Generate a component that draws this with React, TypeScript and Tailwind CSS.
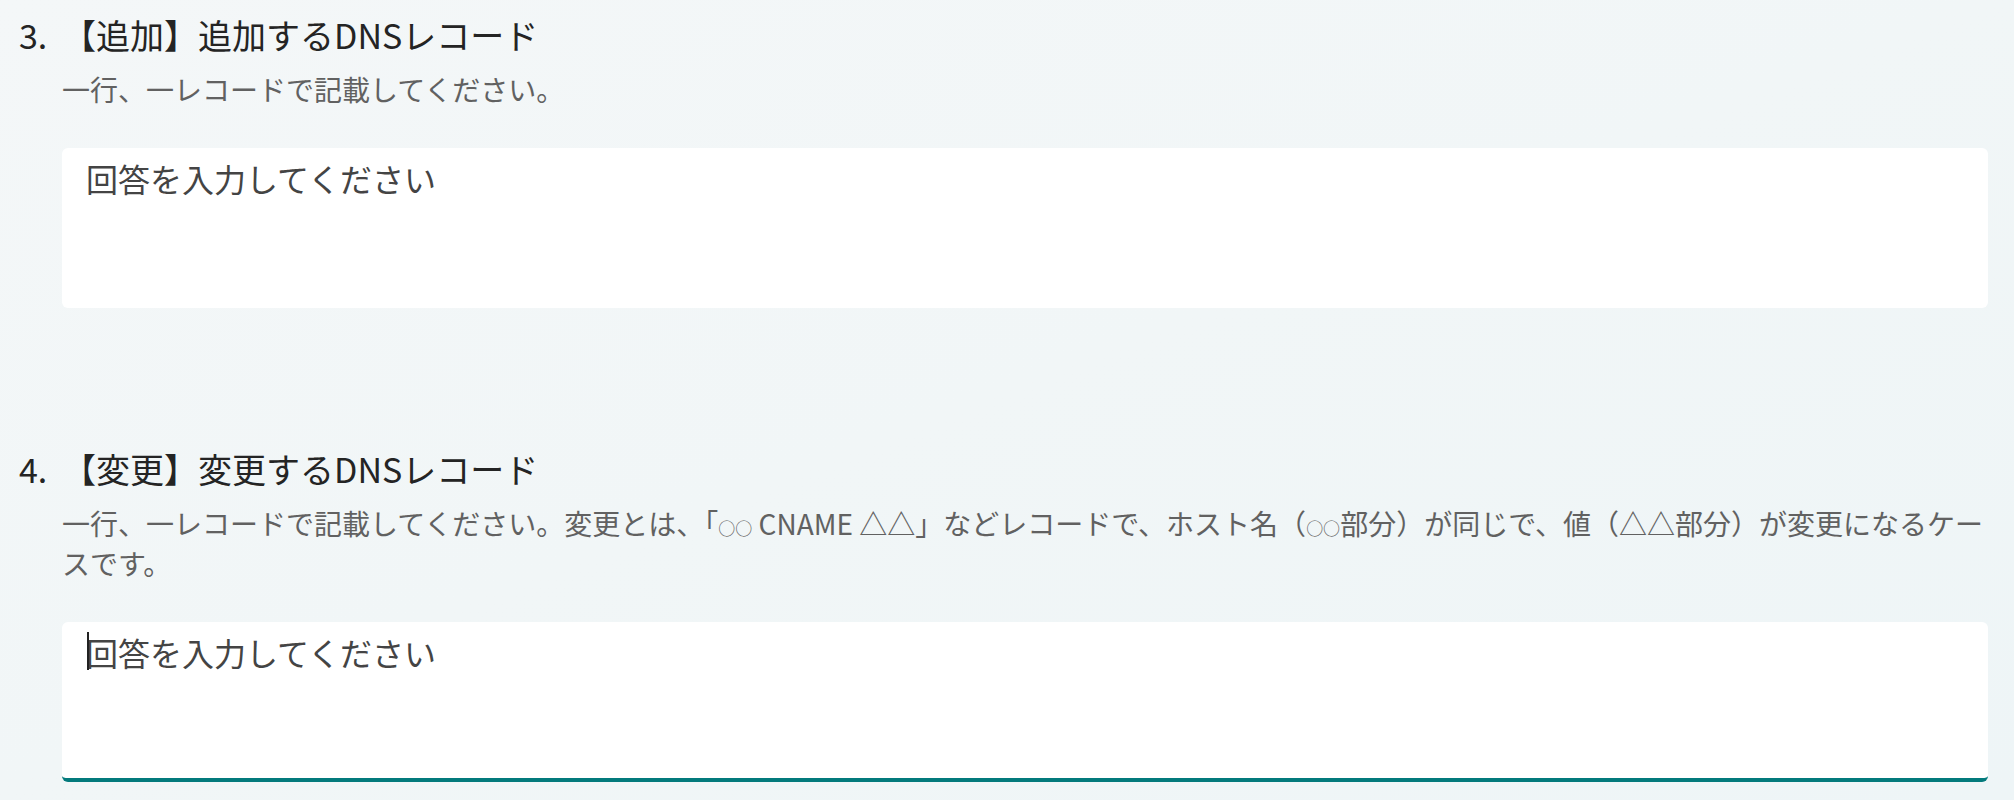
import { FunctionComponent, ReactNode } from 'react';

interface QuestionProps {
  num: string;
  title: string;
  description: ReactNode;
  focused?: boolean;
  className?: string;
}

const Circles = () => <span className="text-[17px] leading-none">○○</span>;

const Question: FunctionComponent<QuestionProps> = ({
  num,
  title,
  description,
  focused,
  className,
}: QuestionProps) => {
  return (
    <div className={`flex ${className ?? ''}`}>
      <div className="w-[43px] shrink-0 text-[34px] leading-[48px] text-[#242424]">{num}</div>
      <div className="flex-1 min-w-0">
        <h3 className="text-[34px] leading-[48px] text-[#242424]">{title}</h3>
        <p className="mt-[10px] text-[28px] leading-[40px] text-[#616161]">{description}</p>
        <div
          className={`mt-[39px] h-[160px] rounded-[6px] bg-white pl-[24px] pt-[8px] ${
            focused ? 'border-b-4 border-[#037a7c]' : ''
          }`}
        >
          <div className="relative text-[32px] leading-[44px] text-[#444444]">
            {focused && (
              <span className="absolute left-[1px] top-[2px] h-[38px] w-[2px] bg-[#222222]" />
            )}
            回答を入力してください
          </div>
        </div>
      </div>
    </div>
  );
};

export default function App() {
  return (
    <div
      className="min-h-[800px] bg-gradient-to-br from-[#f4f7f8] via-[#f1f6f7] to-[#eef5f7] pl-[19px] pr-[26px] pt-[11px]"
      style={{ fontFamily: '"Noto Sans CJK JP", "Noto Sans", sans-serif' }}
    >
      <Question
        num="3."
        title="【追加】追加するDNSレコード"
        description="一行、一レコードで記載してください。"
      />
      <Question
        className="mt-[137px]"
        num="4."
        title="【変更】変更するDNSレコード"
        focused
        description={
          <>
            一行、一レコードで記載してください。変更とは、「<Circles /> CNAME △△」などレコードで、ホスト名（
            <Circles />
            部分）が同じで、値（△△部分）が変更になるケースです。
          </>
        }
      />
    </div>
  );
}
